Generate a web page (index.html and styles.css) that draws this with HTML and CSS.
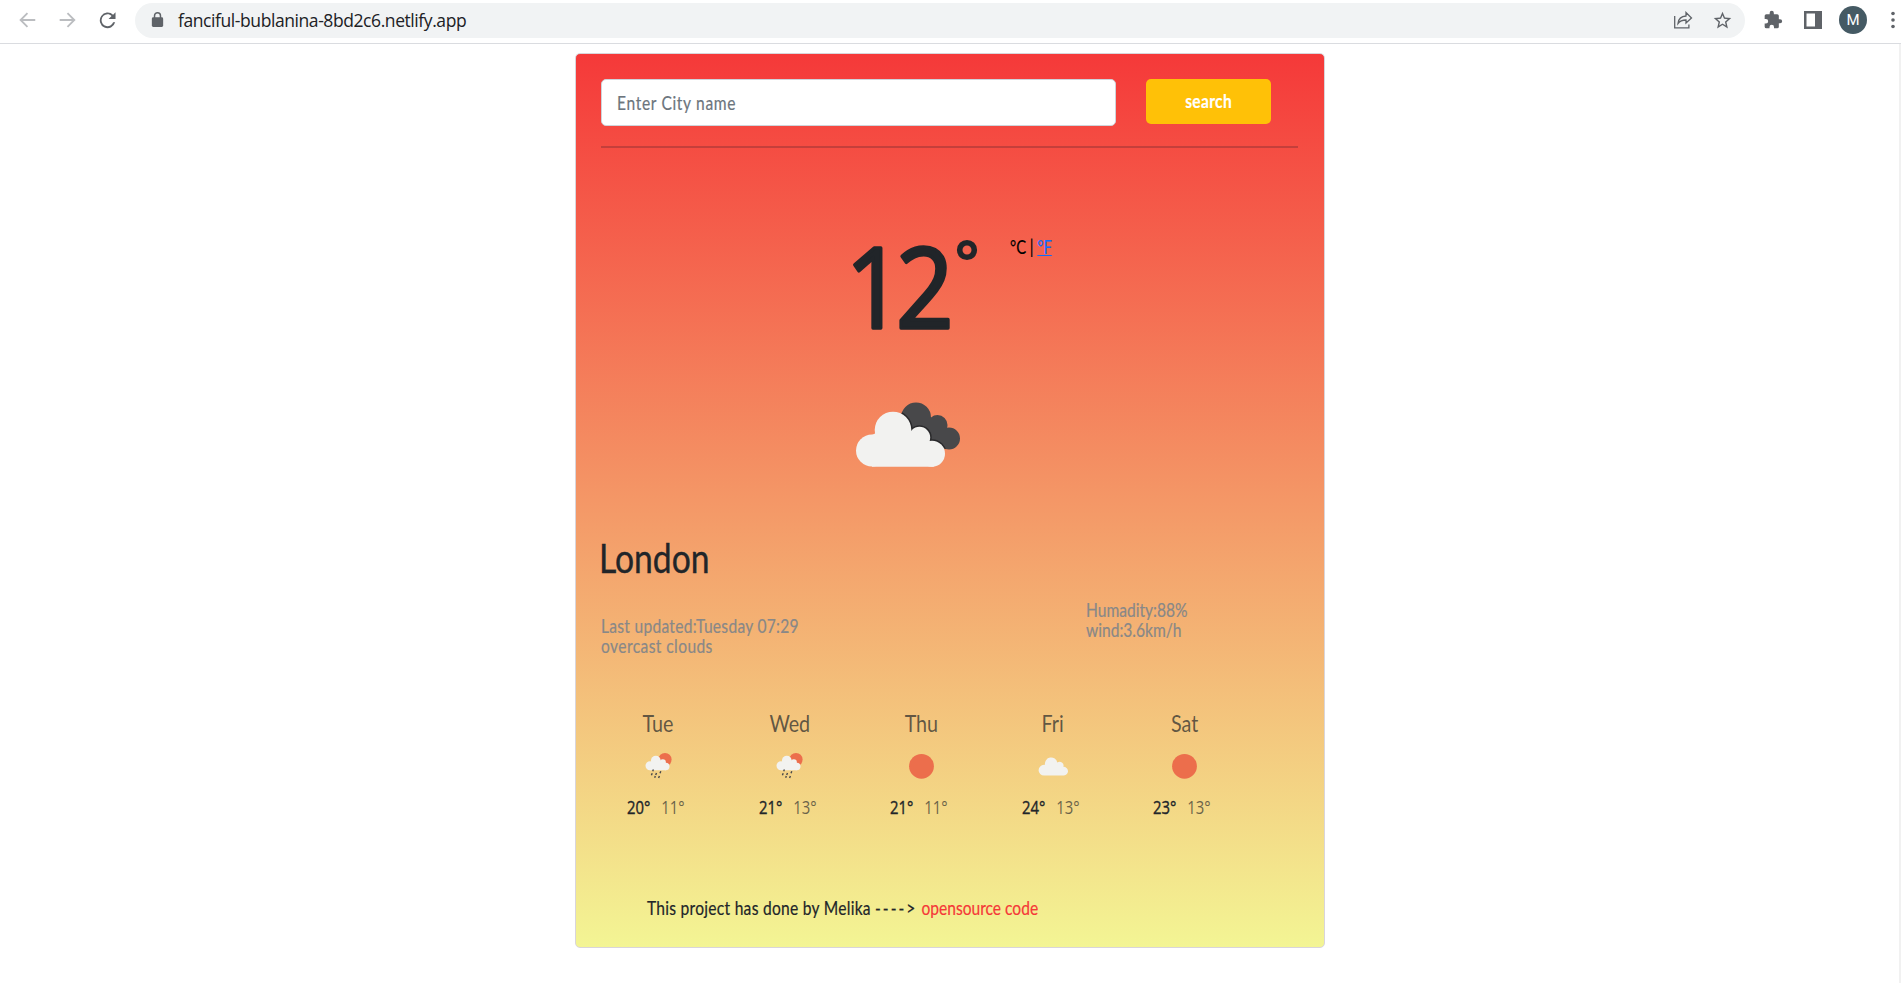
FILE: index.html
```html
<!DOCTYPE html>
<html lang="en">
<head>
<meta charset="utf-8">
<title>Weather</title>
<link rel="stylesheet" href="styles.css">
</head>
<body>
<svg width="0" height="0" class="defs">
  <defs>
    <clipPath id="back"><circle cx="71" cy="22.500" r="15"/><circle cx="92.500" cy="30" r="10"/><circle cx="104" cy="43.500" r="11"/><path d="M62 24h38v18l-2 10H66z"/></clipPath>
    <g id="puffs"><circle cx="27" cy="55.500" r="16"/><circle cx="48" cy="35" r="18.300"/><circle cx="74.500" cy="42.500" r="10.700"/><circle cx="87" cy="58.800" r="13"/><path d="M27 40l8-4h36l12 12 6 23.700H27z"/></g>
    <g id="showers">
      <circle cx="22" cy="7.500" r="6.600" fill="#ec6e4c"/>
      <g fill="#f2f2f0"><circle cx="7" cy="13.700" r="4.500"/><circle cx="12.800" cy="8.700" r="4.900"/><circle cx="19.800" cy="10.400" r="3.100"/><circle cx="22.800" cy="14.500" r="3.700"/><path d="M7 10h14l2 8.200H7z"/></g>
      <path stroke="#48484a" stroke-width="1.400" d="M10.400 17.500l-.7 1.700M9.200 21.300l-.8 2M13.500 21l-.8 2M17.800 19.300l-.8 2M12.300 24.100l-.6 1.600M16.400 24.100l-.8 2"/>
    </g>
  </defs>
</svg>
<header class="toolbar">
  <svg class="nav" viewBox="0 0 24 24" fill="none" stroke="#bbbdc0" stroke-width="2"><path d="M21 12H5M12.500 4.500L5 12l7.500 7.500"/></svg>
  <svg class="nav" viewBox="0 0 24 24" fill="none" stroke="#bbbdc0" stroke-width="2"><path d="M4 12h16M12.500 4.500L20 12l-7.500 7.500"/></svg>
  <svg class="nav" viewBox="0 0 24 24" fill="#5f6368"><path d="M18.650 6.350A8.500 8.500 0 1 0 20.900 14.500h-2.200A6.500 6.500 0 1 1 12.500 5.800c1.800 0 3.200.7 4.500 1.900L13.700 11H21.300V3.600z"/></svg>
  <div class="omnibox">
    <svg class="lock" viewBox="0 0 12 15"><rect x=".7" y="5" width="10.600" height="9" rx="1.300" fill="#5f6368"/><path d="M3.200 6V3.500a2.800 2.800 0 0 1 5.600 0V6" fill="none" stroke="#5f6368" stroke-width="1.400"/></svg>
    <span class="url">fanciful-bublanina-8bd2c6.netlify.app</span>
    <svg class="share" viewBox="0 0 20 18" fill="none" stroke="#5f6368" stroke-width="1.300"><path d="M1.700 5v11.800h14.200v-3.300M5 12.500c.5-5 3.500-7.300 8-7.500V1.500L18.500 7 13 12V9c-3.500 0-6 .8-8 3.500z"/></svg>
    <svg class="star" viewBox="0 0 24 24" fill="#5f6368"><path d="M22 9.240l-7.190-.62L12 2 9.190 8.630 2 9.240l5.460 4.730L5.820 21 12 17.270 18.180 21l-1.630-7.030L22 9.240zM12 15.400l-3.760 2.270 1-4.280-3.320-2.880 4.380-.38L12 6.100l1.710 4.040 4.380.38-3.320 2.880 1 4.280L12 15.400z"/></svg>
  </div>
  <svg class="puzzle" viewBox="0 0 24 24" fill="#5f6368"><path d="M20.500 11H19V7a2 2 0 0 0-2-2h-4V3.500a2.500 2.500 0 0 0-5 0V5H4a2 2 0 0 0-2 2v3.800h1.500a2.700 2.700 0 0 1 0 5.400H2V20a2 2 0 0 0 2 2h3.800v-1.500a2.700 2.700 0 0 1 5.400 0V22H17a2 2 0 0 0 2-2v-4h1.500a2.500 2.500 0 0 0 0-5z"/></svg>
  <svg class="panel" viewBox="0 0 18 18"><path fill="#5f6368" fill-rule="evenodd" d="M0 0h18v18H0zM2.500 2.500v13h8.500v-13z"/></svg>
  <span class="avatar">M</span>
  <svg class="dots" viewBox="0 0 4 18" fill="#5f6368"><circle cx="2" cy="2.500" r="1.800"/><circle cx="2" cy="9" r="1.800"/><circle cx="2" cy="15.500" r="1.800"/></svg>
</header>
<div class="viewport">
<main class="card">
  <form class="search">
    <div class="field"><span class="sq placeholder">Enter City name</span></div>
    <div class="button"><span class="sq">search</span></div>
  </form>
  <div class="rule"></div>
  <section class="now">
    <svg class="degrees" viewBox="-10 -16 140 170">
      <text transform="scale(.9 1)" x="-5" y="111.500">12</text>
      <circle cx="117" cy="34" r="7.300"/>
    </svg>
    <div class="units"><span class="sq">°C | <a>°F</a></span></div>
  </section>
  <svg class="hero" viewBox="0 0 125 85">
    <g clip-path="url(#back)"><path fill="#48484a" d="M0 0h125v85H0z"/><use href="#puffs" fill="#29292b" stroke="#29292b" stroke-width="3"/></g>
    <use href="#puffs" fill="#f2f2f0"/>
  </svg>
  <h1 class="city"><span class="sq">London</span></h1>
  <section class="info">
    <div class="left"><div class="sq updated">Last updated:Tuesday 07:29</div><div class="sq clouds">overcast clouds</div></div>
    <div class="right"><div class="sq">Humadity:88%</div><div class="sq">wind:3.6km/h</div></div>
  </section>
  <section class="forecast">
    <div class="day"><div class="name"><span class="sq">Tue</span></div><svg viewBox="0 0 30 30"><use href="#showers"/></svg><div class="temps"><b>20°</b><i>11°</i></div></div>
    <div class="day"><div class="name"><span class="sq">Wed</span></div><svg viewBox="0 0 30 30"><use href="#showers"/></svg><div class="temps"><b>21°</b><i>13°</i></div></div>
    <div class="day"><div class="name"><span class="sq">Thu</span></div><svg viewBox="0 0 30 30"><circle cx="15.500" cy="14.300" r="12.400" fill="#ec6e4c"/></svg><div class="temps"><b>21°</b><i>11°</i></div></div>
    <div class="day"><div class="name"><span class="sq">Fri</span></div><svg viewBox="0 0 30 30"><path fill="#f2f2f0" d="M6 23.600a5.400 5.400 0 0 1 0-10.800h1a6.200 6.200 0 0 1 12.300-2.200a3.800 3.800 0 0 1 6 4.200a4.400 4.400 0 0 1 .6 8.800z"/></svg><div class="temps"><b>24°</b><i>13°</i></div></div>
    <div class="day"><div class="name"><span class="sq">Sat</span></div><svg viewBox="0 0 30 30"><circle cx="15.500" cy="14.300" r="12.400" fill="#ec6e4c"/></svg><div class="temps"><b>23°</b><i>13°</i></div></div>
  </section>
  <footer class="credit"><span class="sq">This project has done by Melika <span class="arrow">----&gt;</span> <a>opensource code</a></span></footer>
</main>
</div>
</body>
</html>
```
FILE: styles.css
```css
* { box-sizing: border-box; }
body { margin: 0; width: 1901px; height: 983px; overflow: hidden; background: #fff; color: #212529; font: 19px/20px Lato, sans-serif; }
svg { display: block; flex: none; }
.defs { position: absolute; }
.toolbar { display: flex; align-items: center; height: 44px; padding: 0 0 3px 16px; border-bottom: 1px solid #dadce0; }
.nav { width: 22px; height: 22px; margin-right: 18px; }
.omnibox { display: flex; align-items: center; width: 1610px; height: 35px; margin-right: 18px; padding: 0 12px 0 16px; margin-left: -1px; border-radius: 18px; background: #f1f3f4; }
.lock { width: 13px; height: 16px; }
.url { margin-left: 14px; font: 17.500px/24px "Open Sans", sans-serif; color: #202124; letter-spacing: -.42px; }
.share { width: 20px; height: 18px; margin-left: auto; margin-right: 19px; }
.star { width: 21px; height: 21px; }
.puzzle { width: 20px; height: 20px; margin-right: 21px; }
.panel { width: 18px; height: 18px; margin-right: 17px; }
.avatar { width: 28px; height: 28px; margin-right: 24px; border-radius: 50%; background: #455a64; color: #fff; text-align: center; font: 15px/28px Roboto, sans-serif; }
.dots { width: 4px; height: 18px; }
.viewport { height: 939px; padding-top: 9px; border-right: 2px solid #f1f1f1; }
.card { width: 750px; height: 895px; margin-left: 575px; padding: 25px; border: 1px solid #d9d5da; border-radius: 5px; background: linear-gradient(to bottom, #f53939, #f3f594); }
.sq { display: inline-block; white-space: nowrap; transform: scaleX(.82); transform-origin: 0 50%; -webkit-text-stroke: .2px; }
.search { display: flex; gap: 30px; height: 47px; }
.field { width: 515px; height: 47px; padding: 0 15px; border: 1px solid #ced4da; border-radius: 5px; background: #fff; color: #6c757d; line-height: 46px; }
.placeholder { letter-spacing: .8px; }
.button { width: 125px; height: 45px; border-radius: 5px; background: #ffc107; color: #fff; font-weight: 700; text-align: center; line-height: 44px; letter-spacing: .4px; }
.button .sq { transform-origin: 50% 50%; }
.rule { width: 697px; height: 2px; margin-top: 20px; background: #c43f3b; }
.now { display: flex; height: 144px; margin-top: 68px; padding-left: 239px; }
.degrees { width: 140px; height: 170px; margin-top: -16px; font: 112px "Open Sans", sans-serif; letter-spacing: -8px; fill: #212529; }
.degrees text { stroke: #212529; stroke-width: 3.500px; stroke-linejoin: round; }
.degrees circle { fill: none; stroke: #212529; stroke-width: 5.600px; }
.units { margin: 21px 0 0 30px; color: #000; }
.units .sq { transform: scaleX(.78); }
.units a { color: #0d6efd; text-decoration: underline; }
.hero { width: 125px; height: 85px; margin: 35px 0 0 244px; }
.city { margin: 56px 0 0; font-size: 41px; line-height: 44px; font-weight: 400; }
.city .sq { transform: translateX(-2px) scaleX(.82); -webkit-text-stroke: .4px; }
.info { display: flex; height: 56px; margin-top: 20px; color: #888; }
.info .sq { display: block; }
.left { width: 485px; padding-top: 16px; }
.updated { letter-spacing: .34px; }
.clouds { letter-spacing: .5px; }
.right { width: 200px; }
.forecast { display: flex; margin-top: 52px; margin-left: -9px; }
.day { width: 131.600px; display: flex; flex-direction: column; align-items: center; }
.day .sq { transform-origin: 50% 50%; -webkit-text-stroke: 0; }
.name { font-size: 24px; line-height: 30px; color: rgba(33,37,41,.7); }
.day svg { width: 30px; height: 30px; margin: 14px 0 15px; }
.temps { display: flex; gap: 14px; font: 19px/20px "Open Sans", sans-serif; transform: translate(-2px, 0) scaleX(.78); }
.temps b { font-weight: 500; -webkit-text-stroke: .4px; }
.temps i { font-style: normal; opacity: .65; }
.credit { margin: 81px 0 0 46px; line-height: 20px; letter-spacing: .33px; }
.arrow { letter-spacing: 2.400px; }
.credit a { color: #f53838; letter-spacing: 0; }
```
